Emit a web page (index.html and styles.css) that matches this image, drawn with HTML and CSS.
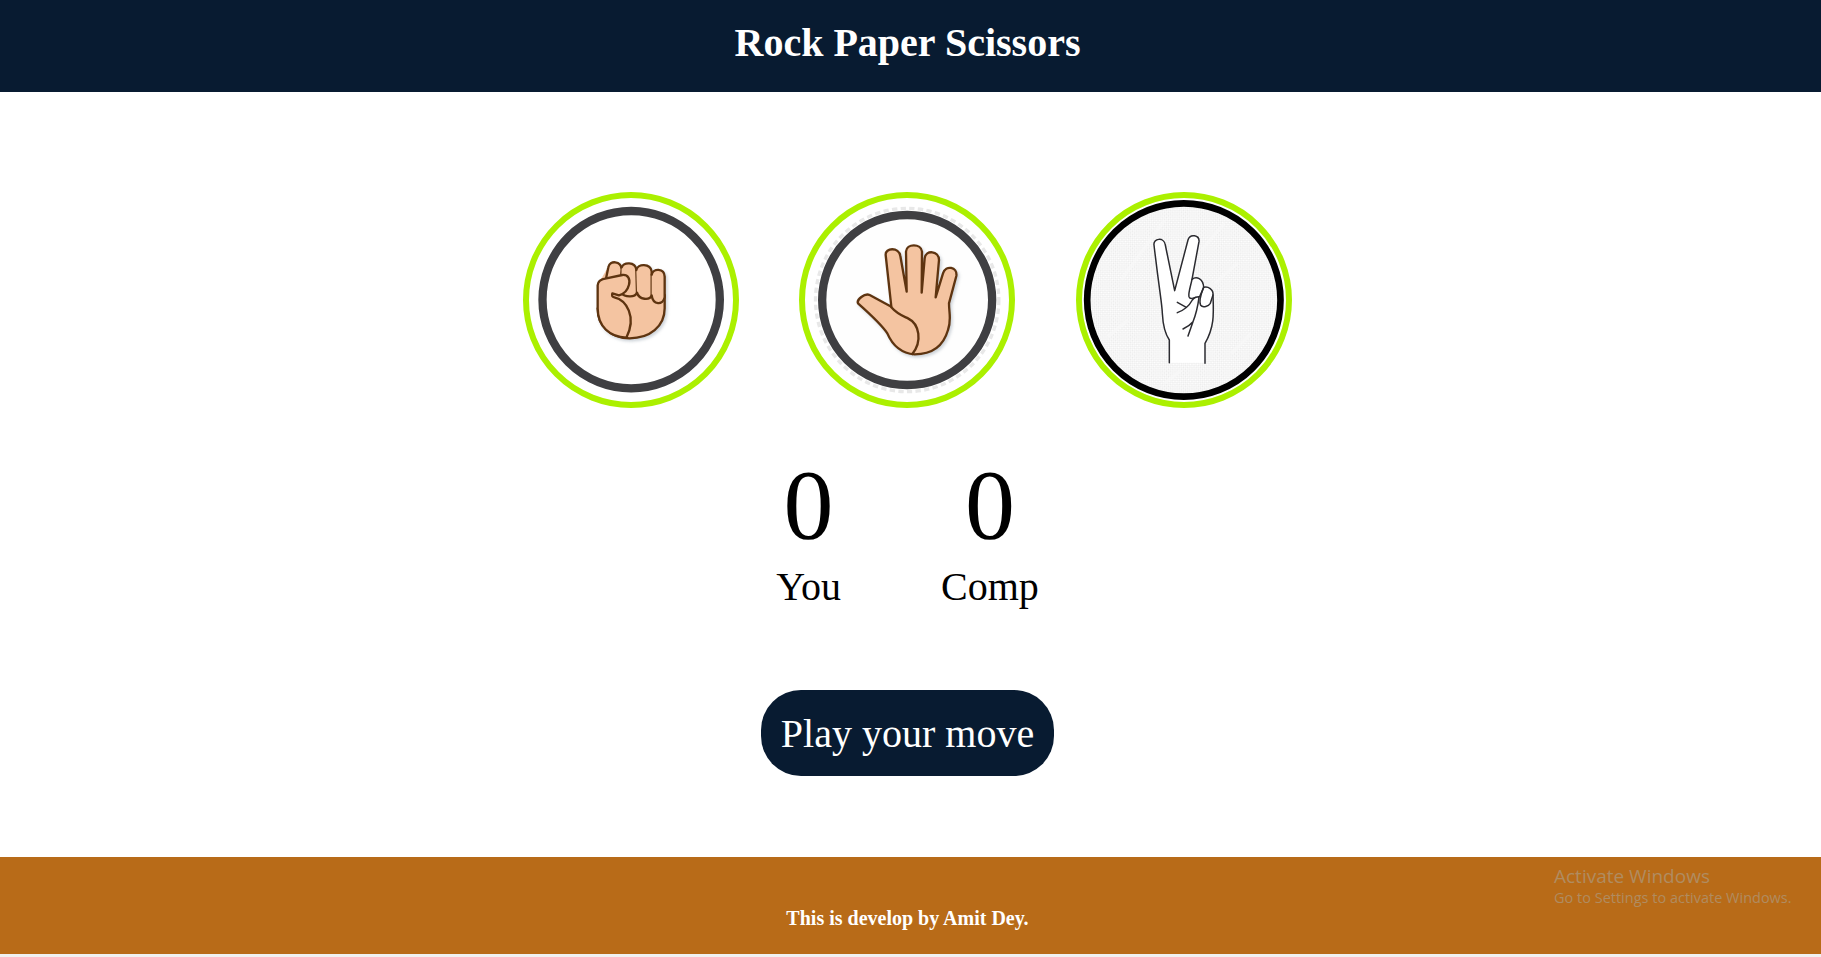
FILE: index.html
```html
<!DOCTYPE html>
<html lang="en">
<head>
  <meta charset="UTF-8">
  <title>Rock Paper Scissors</title>
  <link rel="stylesheet" href="styles.css">
</head>
<body>

<header class="cabecera">
  <h1>Rock Paper Scissors</h1>
</header>

<div class="choices">
  <div class="choice" id="rock">
    <svg class="pic" viewBox="58 54 612 612">
      <circle class="ring ring-white" cx="364.5" cy="359" r="266"/>
      <g class="hand hand-skin">
        <path class="nostroke" d="M264 315 L264 385 C264 440 305 475 360 475 C420 475 465 440 465 385 L465 300 L290 270 Z"/>
        <path class="line" d="M264 385 C264 440 305 475 360 475 C420 475 465 440 465 385 L465 345"/>
        <path d="M289 296 L296 262 C300 240 334 242 336 268 L334 292"/>
        <path d="M336 262 C342 246 376 244 380 268 L382 338 C376 354 345 352 334 338"/>
        <path d="M380 270 C384 250 422 250 426 274 L426 346 C420 362 388 360 382 338"/>
        <path d="M426 284 C430 264 464 264 465 290 L465 352 C460 376 430 376 426 346"/>
        <path d="M264 385 L264 316 C264 304 272 298 290 295 L338 285 C356 283 362 298 358 314 C354 330 342 342 328 346 L308 340 C306 348 308 351 314 352 C350 360 382 410 350 473 C300 470 264 440 264 385 Z"/>
      </g>
    </svg>
  </div>

  <div class="choice" id="paper">
    <svg class="pic" viewBox="46 54 612 612">
      <circle class="ring-dots" cx="352.5" cy="360" r="275"/>
      <circle class="ring ring-gray" cx="352.5" cy="360" r="255"/>
      <g class="hand hand-skin">
        <path d="M305 380 L288 225 C286 203 328 200 332 228 L351 335 L349 215 C350 190 395 190 397 215 L396 338 L405 235 C408 208 448 212 448 240 L438 352 L460 280 C468 254 504 260 500 288 L478 370 C478 400 486 420 475 450 C462 495 430 523 375 523 C340 520 310 500 293 460 C280 440 250 410 205 370 C200 360 225 338 240 345 Z"/>
        <path class="line" d="M305 382 C325 405 345 410 355 415 C390 432 398 485 368 522"/>
      </g>
    </svg>
  </div>

  <div class="choice" id="scissors">
    <svg class="pic" viewBox="52 54 612 612">
      <defs>
        <pattern id="trama" width="9" height="9" patternUnits="userSpaceOnUse" patternTransform="rotate(45)">
          <rect class="trama-a" width="9" height="9"/>
          <rect class="trama-b" width="4.5" height="4.5"/>
          <rect class="trama-b" x="4.5" y="4.5" width="4.5" height="4.5"/>
        </pattern>
      </defs>
      <circle class="fondo-trama" cx="357.5" cy="360" r="290"/>
      <path class="streak" d="M130 470 L190 420 M300 120 L170 300 M480 130 L410 210 M520 250 L450 310 M560 460 L500 520 M300 610 L350 570"/>
      <circle class="ring ring-black" cx="357.5" cy="360" r="290"/>
      <g class="outline">
        <path class="nostroke" d="M314 548 L314 480 C300 460 295 440 293 400 C292 370 285 340 268 195 C265 175 298 170 302 195 L330 332 L370 180 C376 160 405 165 403 185 L382 298 C395 288 415 295 417 322 C430 318 447 328 445 345 C447 400 450 440 423 490 L421 548 Z"/>
        <path d="M314 548 L314 480 C300 460 295 440 293 400 C292 370 285 340 268 195 C265 175 298 170 302 195 L330 332 L370 180 C376 160 405 165 403 185 L382 298"/>
        <path d="M421 550 L421 490 C450 440 447 400 445 345 C447 328 430 318 417 322"/>
        <path d="M382 298 C395 288 415 295 417 322 L405 350 M382 298 C378 318 370 340 373 350 C376 358 385 355 392 352"/>
        <path d="M417 322 C410 340 402 365 408 376 C415 385 432 378 437 370 L445 345"/>
        <path d="M338 367 L365 382 M338 398 C360 390 375 375 383 360 C388 352 396 350 403 350 M403 352 C400 375 395 400 385 425 L370 468 M385 425 C375 437 365 442 355 447"/>
      </g>
    </svg>
  </div>
</div>

<div class="scores">
  <div class="score">
    <p class="numero" id="you-score">0</p>
    <p class="etiqueta">You</p>
  </div>
  <div class="score">
    <p class="numero" id="comp-score">0</p>
    <p class="etiqueta">Comp</p>
  </div>
</div>

<div class="mensaje">
  <span class="boton">Play your move</span>
</div>

<footer class="pie">
  <p>This is develop by Amit Dey.</p>
  <div class="activar">
    <span class="activar-titulo">Activate Windows</span>
    <span class="activar-texto">Go to Settings to activate Windows.</span>
  </div>
</footer>

</body>
</html>
```

FILE: styles.css
```css
html {
  background-color: #f1f1f1;
}

body {
  margin: 0;
  padding: 0;
  font-family: "Liberation Serif", "Times New Roman", serif;
  background-color: #ffffff;
  color: #000000;
  text-align: center;
}

p, h1 {
  margin: 0;
}

.cabecera {
  background-color: #081b31;
  color: #ffffff;
  height: 92px;
  padding: 19px 6px 0 0;
  box-sizing: border-box;
}

h1 {
  font-size: 40px;
}

.choices {
  display: flex;
  justify-content: center;
  gap: 60.5px;
  padding: 100px 7px 0 0;
}

.choice {
  width: 216px;
  height: 216px;
  box-sizing: border-box;
  border: 6px solid #abf000;
  border-radius: 50%;
  overflow: hidden;
}

.pic {
  display: block;
  width: 204px;
  height: 204px;
}

.ring {
  stroke-width: 25;
}

.ring-white {
  fill: #ffffff;
  stroke: #3f3f42;
}

.ring-gray {
  fill: #fefefe;
  stroke: #3f3f42;
}

.ring-black {
  fill: none;
  stroke: #000000;
  stroke-width: 20;
}

.ring-dots {
  fill: none;
  stroke: #e8e8e8;
  stroke-width: 10;
  stroke-dasharray: 16 10;
}

.fondo-trama {
  fill: url(#trama);
}

.trama-a {
  fill: #ffffff;
}

.trama-b {
  fill: #ebebeb;
}

.streak {
  fill: none;
  stroke: #f8f8f8;
  stroke-width: 10;
  opacity: 0.6;
}

.hand {
  filter: drop-shadow(5px 6px 5px rgba(90, 110, 130, 0.3));
}

.hand-skin path {
  fill: #f4c4a1;
  stroke: #5e3410;
  stroke-width: 7;
  stroke-linejoin: round;
  stroke-linecap: round;
}

.hand-skin .nostroke {
  stroke: none;
}

.hand-skin .line {
  fill: none;
}

.outline path {
  fill: none;
  stroke: #2b2b30;
  stroke-width: 4.5;
  stroke-linejoin: round;
  stroke-linecap: round;
}

.outline .nostroke {
  fill: #ffffff;
  stroke: none;
}

.scores {
  display: flex;
  justify-content: center;
  gap: 100px;
  padding: 38px 6px 0 0;
}

.numero {
  font-size: 100px;
  line-height: 117px;
}

.etiqueta {
  font-size: 40px;
}

.mensaje {
  padding: 80px 6px 0 0;
}

.boton {
  display: inline-block;
  background-color: #081b31;
  color: #ffffff;
  font-size: 40px;
  padding: 19.5px 20px;
  border-radius: 40px;
}

.pie {
  position: relative;
  margin-top: 81px;
  background-color: #b86b18;
  color: #ffffff;
  font-weight: bold;
  font-size: 20px;
  padding: 50px 6px 24px 0;
}

.activar {
  position: absolute;
  left: 1554px;
  top: 7px;
  display: flex;
  flex-direction: column;
  text-align: left;
  font-family: "Open Sans", "Noto Sans", sans-serif;
  font-weight: normal;
  color: #b08c60;
  white-space: nowrap;
}

.activar-titulo {
  font-size: 19px;
  line-height: 24px;
}

.activar-texto {
  font-size: 14.5px;
  line-height: 20px;
}
```
